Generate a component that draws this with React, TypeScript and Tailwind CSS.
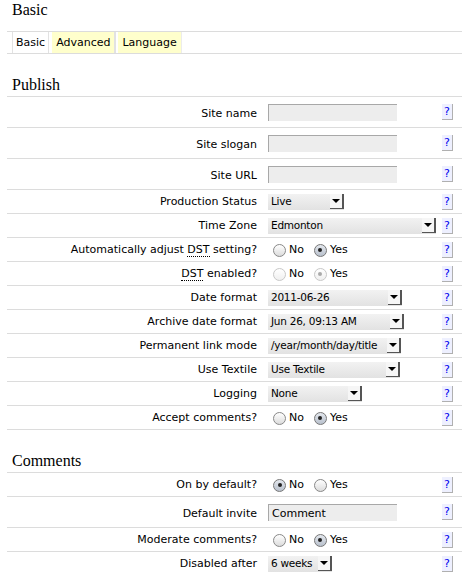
import React from "react";

type Row =
  | { label: React.ReactNode; kind: "text"; value?: string }
  | { label: React.ReactNode; kind: "select"; value: string; w: number }
  | { label: React.ReactNode; kind: "radio"; yes: boolean; disabled?: boolean };

const Dst = () => (
  <abbr className="no-underline border-b border-dotted border-black">DST</abbr>
);

const publish: Row[] = [
  { label: "Site name", kind: "text" },
  { label: "Site slogan", kind: "text" },
  { label: "Site URL", kind: "text" },
  { label: "Production Status", kind: "select", value: "Live", w: 76 },
  { label: "Time Zone", kind: "select", value: "Edmonton", w: 168 },
  { label: <>Automatically adjust <Dst /> setting?</>, kind: "radio", yes: true },
  { label: <><Dst /> enabled?</>, kind: "radio", yes: true, disabled: true },
  { label: "Date format", kind: "select", value: "2011-06-26", w: 134 },
  { label: "Archive date format", kind: "select", value: "Jun 26, 09:13 AM", w: 136 },
  { label: "Permanent link mode", kind: "select", value: "/year/month/day/title", w: 133 },
  { label: "Use Textile", kind: "select", value: "Use Textile", w: 132 },
  { label: "Logging", kind: "select", value: "None", w: 94 },
  { label: "Accept comments?", kind: "radio", yes: true },
];

const comments: Row[] = [
  { label: "On by default?", kind: "radio", yes: false },
  { label: "Default invite", kind: "text", value: "Comment" },
  { label: "Moderate comments?", kind: "radio", yes: true },
  { label: "Disabled after", kind: "select", value: "6 weeks", w: 64 },
];

function Radio({ on, disabled }: { on: boolean; disabled?: boolean }) {
  return (
    <span
      className={`flex h-[13px] w-[13px] items-center justify-center rounded-full border bg-gradient-to-b ${
        disabled
          ? "border-[#c8c8c8] from-white to-[#f0f0f0]"
          : on
            ? "border-[#777] from-[#e4e8ee] to-[#b8c0cc]"
            : "border-[#888] from-white to-[#dcdcdc]"
      }`}
    >
      {on ? (
        <span className={`h-[4px] w-[4px] rounded-full ${disabled ? "bg-[#aaa]" : "bg-[#222]"}`} />
      ) : null}
    </span>
  );
}

function Control({ row }: { row: Row }) {
  if (row.kind === "text") {
    return (
      <div className="flex h-[17px] w-[129px] items-center border-t border-l border-[#a8a8a8] bg-[#ededed] pl-[3px] pt-[1px] text-[11px] leading-none">
        {row.value}
      </div>
    );
  }
  if (row.kind === "select") {
    return (
      <div
        className="flex h-[16px] items-center justify-between bg-gradient-to-b from-[#f2f2f2] to-[#e2e2e2] pl-[3px]"
        style={{ width: row.w }}
      >
        <span className="whitespace-nowrap text-[10.5px] leading-none tracking-[-0.25px]">{row.value}</span>
        <span className="ml-[3px] flex h-[15px] w-[14px] shrink-0 items-center justify-center border-r-2 border-b border-[#555] bg-[#f6f6f6]">
          <span className="h-0 w-0 border-x-[4px] border-t-[4px] border-x-transparent border-t-black" />
        </span>
      </div>
    );
  }
  return (
    <div className="flex items-center pl-[5px] pt-[1px] text-[11px]">
      <Radio on={!row.yes} disabled={row.disabled} />
      <span className="ml-[3px]">No</span>
      <span className="ml-[10px]">
        <Radio on={row.yes} disabled={row.disabled} />
      </span>
      <span className="ml-[3px]">Yes</span>
    </div>
  );
}

function Section({ title, rows }: { title: string; rows: Row[] }) {
  return (
    <div>
      <div className="flex h-[43px] items-end border-b border-[#dcdcdc] pb-[2px] pl-[5px] font-['Liberation_Serif',serif] text-[16px] leading-[18px]">
        {title}
      </div>
      {rows.map((row, i) => (
        <div
          key={i}
          className={`flex items-center border-b border-[#dcdcdc] ${
            row.kind === "text" ? "h-[31px]" : "h-[24px]"
          }`}
        >
          <div
            className={`w-[261px] pr-[11px] text-right text-[11px] ${
              row.kind === "text" ? "pt-[4px]" : "pt-[2px]"
            }`}
          >
            {row.label}
          </div>
          <div className="flex-1">
            <Control row={row} />
          </div>
          <div className="flex w-[22px] justify-start pl-[2px]">
            <span className="flex h-[16px] w-[11px] items-center justify-center border-r border-b border-[#b0b0b0] bg-[#eef0ff] text-[11px] leading-none text-[#0000ee]">
              ?
            </span>
          </div>
        </div>
      ))}
    </div>
  );
}

export default function App() {
  return (
    <div className="h-[575px] w-[471px] overflow-hidden bg-white font-['DejaVu_Sans',sans-serif] text-black">
      <div className="mx-[7px] w-[455px]">
        <div className="flex h-[31px] items-start pt-[1px] pl-[5px] font-['Liberation_Serif',serif] text-[16px] leading-[18px]">
          Basic
        </div>
        <div className="flex h-[23px] items-stretch border-y border-[#dcdcdc] pl-[5px] text-[11px]">
          <span className="flex items-center border-x border-[#e2e2e2] px-[3px] pt-[1px]">Basic</span>
          <span className="ml-[3px] flex items-center border-r-2 border-[#e2e2e2] bg-[#ffffcc] px-[4px] pt-[1px]">
            Advanced
          </span>
          <span className="ml-[2px] flex items-center border-r border-[#ececec] bg-[#ffffcc] px-[4px] pt-[1px]">
            Language
          </span>
        </div>
        <Section title="Publish" rows={publish} />
        <Section title="Comments" rows={comments} />
      </div>
    </div>
  );
}
